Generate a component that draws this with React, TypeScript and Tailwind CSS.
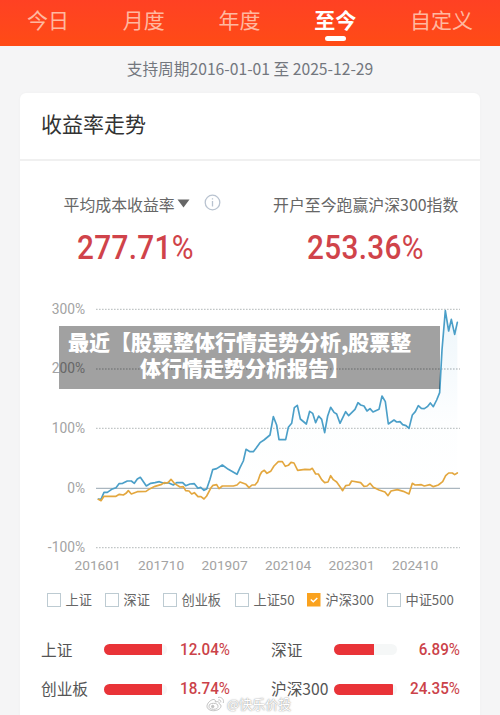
const cjk = 'font-["Noto_Sans_CJK_SC",sans-serif]';
const din = 'font-[Roboto,"Noto_Sans_CJK_SC",sans-serif]';

const fundPoints =
  "175,627 183,628 192,607 202,607 215,598 228,593 237,581 248,580 262,573 274,573 283,580 292,567 301,562 319,588 332,580 345,578 358,575 372,580 385,578 400,585 410,578 428,578 437,587 450,582 463,581 474,595 482,592 492,601 500,597 510,568 518,539 530,536 547,525 565,538 591,553 600,533 610,513 618,478 630,485 640,485 648,475 660,458 672,450 690,435 700,380 710,405 717,449 737,449 745,412 755,400 763,353 772,346 781,387 799,402 809,364 818,370 827,398 836,378 845,388 854,428 863,378 872,352 882,367 890,372 900,400 917,365 926,377 945,358 954,338 962,345 972,348 981,363 990,356 999,366 1017,358 1026,318 1036,335 1045,402 1062,390 1070,396 1080,395 1088,404 1098,407 1107,415 1117,375 1126,365 1135,347 1144,355 1153,356 1162,350 1171,339 1180,350 1190,330 1199,308 1206,180 1216,62 1226,123 1234,88 1244,133 1252,97";

const indexPoints =
  "175,628 183,632 192,619 228,619 238,613 250,615 258,610 265,602 274,612 292,605 318,604 330,596 345,589 365,583 373,578 383,579 393,568 403,580 420,591 430,590 437,602 447,603 455,612 463,608 474,620 483,620 492,627 500,618 512,595 519,586 530,584 537,596 547,588 580,588 591,585 600,576 618,583 627,593 636,585 645,585 653,575 660,555 665,546 673,541 681,550 692,544 702,528 715,515 727,515 736,529 745,526 753,517 762,519 773,541 795,538 810,539 817,535 827,552 835,552 845,569 854,578 864,576 872,557 880,569 890,576 900,590 908,602 917,587 928,585 935,573 962,578 972,589 981,588 990,580 1000,592 1017,600 1035,606 1044,617 1053,603 1072,599 1090,604 1107,612 1117,580 1125,585 1144,584 1153,588 1170,584 1180,590 1195,585 1208,575 1217,557 1226,549 1237,549 1244,554 1252,549";

const yTicks = [
  { label: "300%", y: 309.3 },
  { label: "200%", y: 369 },
  { label: "100%", y: 428.4 },
  { label: "0%", y: 488.3 },
  { label: "-100%", y: 547.7 },
];

const xTicks = ["201601", "201710", "201907", "202104", "202301", "202410"];

const tabs = ["今日", "月度", "年度", "至今", "自定义"];

const legend = [
  { name: "上证", width: "w-[58px]" },
  { name: "深证", width: "w-[58px]" },
  { name: "创业板", width: "w-[72px]" },
  { name: "上证50", width: "w-[72px]" },
  { name: "沪深300", width: "w-[80px]", checked: true },
  { name: "中证500", width: "w-[70px]" },
];

const returns = [
  { name: "上证", value: "12.04", fill: 58.5 },
  { name: "深证", value: "6.89", fill: 40 },
  { name: "创业板", value: "18.74", fill: 58.5 },
  { name: "沪深300", value: "24.35", fill: 59.5 },
];

function BigNumber({ value }: { value: string }) {
  return (
    <div
      className={`mt-[12px] w-fit origin-left scale-x-[0.9] text-[33px] leading-[38px] font-medium tracking-[0.4px] text-[#d0434a] ${din}`}
    >
      {value}
      <span className="font-normal">%</span>
    </div>
  );
}

function Chart() {
  return (
    <svg className="block" width="460" height="290" viewBox="20 290 460 290">
      <defs>
        <linearGradient id="area" x1="0" y1="0" x2="0" y2="1">
          <stop offset="0" stopColor="#3f9dd0" stopOpacity="0.09" />
          <stop offset="0.6" stopColor="#3f9dd0" stopOpacity="0.01" />
          <stop offset="1" stopColor="#3f9dd0" stopOpacity="0" />
        </linearGradient>
      </defs>
      {yTicks.map((t) => (
        <g key={t.label}>
          <line
            x1="96"
            x2="460"
            y1={t.y}
            y2={t.y}
            stroke={t.label === "0%" ? "#aab6bf" : "#c2c6c7"}
            strokeWidth={t.label === "0%" ? 1.2 : 1.3}
            strokeDasharray={t.label === "0%" ? undefined : "1.6 1.4"}
          />
          <text x="85" y={t.y + 4.2} textAnchor="end" fontSize="13.8" fill="#a3a3a3" className={din}>
            {t.label}
          </text>
        </g>
      ))}
      {xTicks.map((t, i) => (
        <text key={t} x={74.5 + i * 63.5} y="569.5" fontSize="13.7" fill="#a3a3a3" className={din}>
          {t}
        </text>
      ))}
      <g transform="translate(40 290) scale(0.33333)" fill="none" strokeLinejoin="round" strokeLinecap="round">
        <polygon points={"175,595 " + fundPoints + " 1252,595"} fill="url(#area)" />
        <polyline points={fundPoints} stroke="#4b9fc8" strokeWidth="5" />
        <polyline points={indexPoints} stroke="#e3a73f" strokeWidth="5" />
      </g>
    </svg>
  );
}

export default function App() {
  return (
    <div className={`relative h-[715px] w-[500px] overflow-hidden bg-[#f5f5f6] ${cjk}`}>
      <nav className="flex h-[46px] justify-between bg-gradient-to-b from-[#ff4123] to-[#ff4b15] px-[27px]">
        {tabs.map((t) => (
          <div key={t} className="flex flex-col items-center">
            <span
              className={
                t === "至今"
                  ? "h-9 text-[21px] leading-[38px] font-bold text-white"
                  : "h-9 text-[21px] leading-[38px] text-[#ffb8a0]"
              }
            >
              {t}
            </span>
            {t === "至今" && <i className="h-[4.5px] w-[21px] rounded-full bg-white" />}
          </div>
        ))}
      </nav>

      <p className="h-[47px] text-center text-[15.7px] leading-[46px] whitespace-nowrap text-[#73777e]">
        支持周期2016-01-01 至 2025-12-29
      </p>

      <main className="mx-5 h-[640px] rounded-t-md bg-white shadow-[0_0_3px_rgba(0,0,0,0.03)]">
        <h1 className="h-[68px] border-b-2 border-[#f0f0f0] pl-[21px] text-[21px] leading-[61px] text-[#333]">收益率走势</h1>

        <section className="flex h-[129px] pt-[32px] text-[15.9px] text-[#666]">
          <div className="w-[233px] pl-[43.5px]">
            <div className="flex h-6 items-center whitespace-nowrap">
              平均成本收益率
              <svg className="-mt-1 ml-[2px]" width="13" height="9" viewBox="0 0 13 9">
                <path d="M0.5 0.5h12L6.5 8.5z" fill="#666" />
              </svg>
              <svg className="-mt-1.5 ml-[14px]" width="17" height="17" viewBox="0 0 17 17" fill="none" stroke="#b9c3d0" strokeWidth="1.3">
                <circle cx="8.5" cy="8.5" r="7.3" />
                <path d="M8.5 7v5.5M8.5 4.2v1.4" />
              </svg>
            </div>
            <div className="pl-[13px]">
              <BigNumber value="277.71" />
            </div>
          </div>
          <div className="pl-[20px]">
            <div className="h-6 leading-6 whitespace-nowrap">开户至今跑赢沪深300指数</div>
            <div className="pl-[34px]">
              <BigNumber value="253.36" />
            </div>
          </div>
        </section>

        <Chart />

        <ul className="flex h-10 items-center pl-[27.4px] text-[13.2px] text-[#666]">
          {legend.map((l) => (
            <li key={l.name} className={`flex shrink-0 items-center gap-[4.6px] whitespace-nowrap ${l.width}`}>
              {l.checked ? (
                <svg width="13.5" height="13.5" viewBox="0 0 13.5 13.5">
                  <rect width="13.5" height="13.5" fill="#faa21e" />
                  <path d="M3.8 6.4l2.5 2.4 4-3.7" fill="none" stroke="#fff" strokeWidth="1.4" />
                </svg>
              ) : (
                <i className="h-[13.5px] w-[13.5px] border border-[#bdcbd2]" />
              )}
              {l.name}
            </li>
          ))}
        </ul>

        <div className="mt-[10px] grid grid-cols-[230px_230px]">
          {returns.map((r) => (
            <div key={r.name} className="flex h-[39.5px] items-center pl-[21px]">
              <span className="w-[62.5px] text-[15.7px] whitespace-nowrap text-[#555]">{r.name}</span>
              <div className="h-[11px] w-[63.5px] overflow-hidden rounded-full bg-[#f5f7f7]">
                <div className="h-full bg-[#e93338]" style={{ width: r.fill }} />
              </div>
              <span
                className={`w-[63px] origin-right scale-x-[0.95] text-right text-[16px] font-medium text-[#cb4249] ${din}`}
              >
                {r.value}
                <span className="font-normal">%</span>
              </span>
            </div>
          ))}
        </div>
      </main>

      <div className="absolute top-[326px] left-[59px] h-[63px] w-[381px] bg-black/37 pt-[2px] text-[21px] leading-[26px] font-black whitespace-nowrap text-white">
        <div className="pl-[9px]">最近【股票整体行情走势分析,股票整</div>
        <div className="pl-[81px]">体行情走势分析报告】</div>
      </div>

      <div className="absolute top-[694px] left-[206px] flex items-center gap-[2px] text-[13px] leading-5 whitespace-nowrap text-white [text-shadow:0_0_1px_#999,0_0_2px_#aaa]">
        <svg width="19" height="16" viewBox="0 0 19 16" fill="#fff" stroke="#c2c2c2" strokeWidth="1">
          <path d="M7 3.5C4 4.2 1 7.500 1 10.300C1 13 4 14.700 7.700 14.700C12 14.700 15 12.300 15 10C15 8.500 13.800 8 13 7.700C13.500 6 12.300 5 9.300 6C9.700 4.400 9 3.100 7 3.500Z" />
          <ellipse cx="7.5" cy="10.300" rx="4.500" ry="3" />
          <circle cx="6.700" cy="10.500" r="1.200" fill="#c2c2c2" />
          <path d="M12 1.500C15.500 0.500 18.500 3.500 17.200 7M12.300 4C14 3.500 15.200 4.800 14.700 6.300" fill="none" />
        </svg>
        @快乐价投
      </div>
    </div>
  );
}
